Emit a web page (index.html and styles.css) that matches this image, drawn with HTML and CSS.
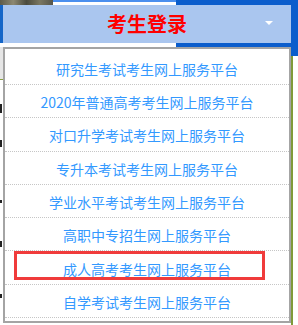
FILE: index.html
```html
<!DOCTYPE html>
<html lang="zh-CN">
<head>
<meta charset="utf-8">
<title>考生登录</title>
<link rel="stylesheet" href="styles.css">
</head>
<body>
<div class="top">
  <div class="photo"></div>
  <div class="band-light"></div>
  <div class="band-dark"></div>
</div>
<div class="header">
  <div class="edge-l"></div>
  <div class="bar">
    <span class="title">考生登录</span>
    <span class="arrow"></span>
  </div>
  <div class="edge-r"></div>
</div>
<div class="gap">
  <div class="gap-white"></div>
  <div class="gap-blue"></div>
</div>
<div class="main">
  <div class="side-l">
    <div class="side-l-gray"></div>
    <div class="mark m1"></div>
    <div class="mark m2"></div>
    <div class="mark m3"></div>
    <div class="mark m4"></div>
    <div class="mark m5"></div>
  </div>
  <ul class="panel">
    <li class="item">研究生考试考生网上服务平台</li>
    <li class="item">2020年普通高考考生网上服务平台</li>
    <li class="item">对口升学考试考生网上服务平台</li>
    <li class="item">专升本考试考生网上服务平台</li>
    <li class="item">学业水平考试考生网上服务平台</li>
    <li class="item">高职中专招生网上服务平台</li>
    <li class="item">成人高考考生网上服务平台<span class="highlight"></span></li>
    <li class="item">自学考试考生网上服务平台</li>
  </ul>
  <div class="side-r">
    <div class="side-r-blue"></div>
    <div class="side-r-line"></div>
  </div>
</div>
</body>
</html>
```
FILE: styles.css
```css
html, body {
  margin: 0;
  padding: 0;
}
body {
  width: 298px;
  height: 325px;
  overflow: hidden;
  background: #fff;
  font-family: "Noto Sans CJK SC", "Microsoft YaHei", sans-serif;
}
.top {
  display: flex;
  height: 5px;
}
.photo {
  width: 53px;
  background: linear-gradient(90deg, #5d5b4a 0%, #8c8872 25%, #4b4b3e 50%, #7a7762 75%, #56554a 100%);
}
.band-light {
  width: 123px;
  box-sizing: border-box;
  border-top: 2px solid #4b8fee;
  background: #fff;
}
.band-dark {
  flex: 1;
  background: #0b5dcc;
}
.header {
  display: flex;
  height: 38px;
}
.edge-l {
  width: 3px;
  background: #1566c8;
}
.bar {
  width: 288px;
  background: #aac6ef;
  position: relative;
  display: flex;
  align-items: center;
  justify-content: center;
}
.title {
  color: #ff0000;
  font-size: 20px;
  font-weight: bold;
  line-height: 1;
}
.arrow {
  position: absolute;
  left: 262px;
  top: 16px;
  width: 0;
  height: 0;
  border-left: 4px solid transparent;
  border-right: 4px solid transparent;
  border-top: 4px solid #fff;
}
.edge-r {
  flex: 1;
  background: #0b5dcc;
}
.gap {
  display: flex;
  height: 4px;
}
.gap-white {
  width: 176px;
}
.gap-blue {
  flex: 1;
  background: #0b5dcc;
}
.main {
  display: flex;
  height: 278px;
}
.side-l {
  width: 3px;
  position: relative;
}
.side-l-gray {
  height: 32px;
  background: #e6e6e6;
  border-bottom: 1px solid #8aa040;
}
.mark {
  position: absolute;
  left: 0;
  width: 2px;
  background: #222;
}
.m1 { top: 57px; height: 9px; }
.m2 { top: 93px; height: 7px; }
.m3 { top: 153px; height: 3px; }
.m4 { top: 194px; height: 6px; }
.m5 { top: 247px; height: 4px; }
.panel {
  list-style: none;
  margin: 0;
  width: 288px;
  height: 276px;
  box-sizing: border-box;
  border: 2px solid #a4a4a4;
  padding: 2.7px 0 0;
  background: #fff;
}
.item {
  position: relative;
  height: 32.29px;
  box-sizing: content-box;
  border-bottom: 1px dotted #c6c6c6;
  display: flex;
  align-items: center;
  justify-content: center;
  padding-top: 0;
  color: #3399ff;
  font-size: 14px;
  line-height: 1;
  padding-top: 2px;
  height: 30.29px;
}
.highlight {
  position: absolute;
  left: 9px;
  top: 0;
  width: 251px;
  height: 29px;
  box-sizing: border-box;
  border: 3px solid #f03b3b;
}
.side-r {
  flex: 1;
  display: flex;
  flex-direction: column;
}
.side-r-blue {
  height: 9px;
  background: #0b5dcc;
}
.side-r-line {
  flex: 1;
  width: 2px;
  background: #7f9a3a;
}
```
